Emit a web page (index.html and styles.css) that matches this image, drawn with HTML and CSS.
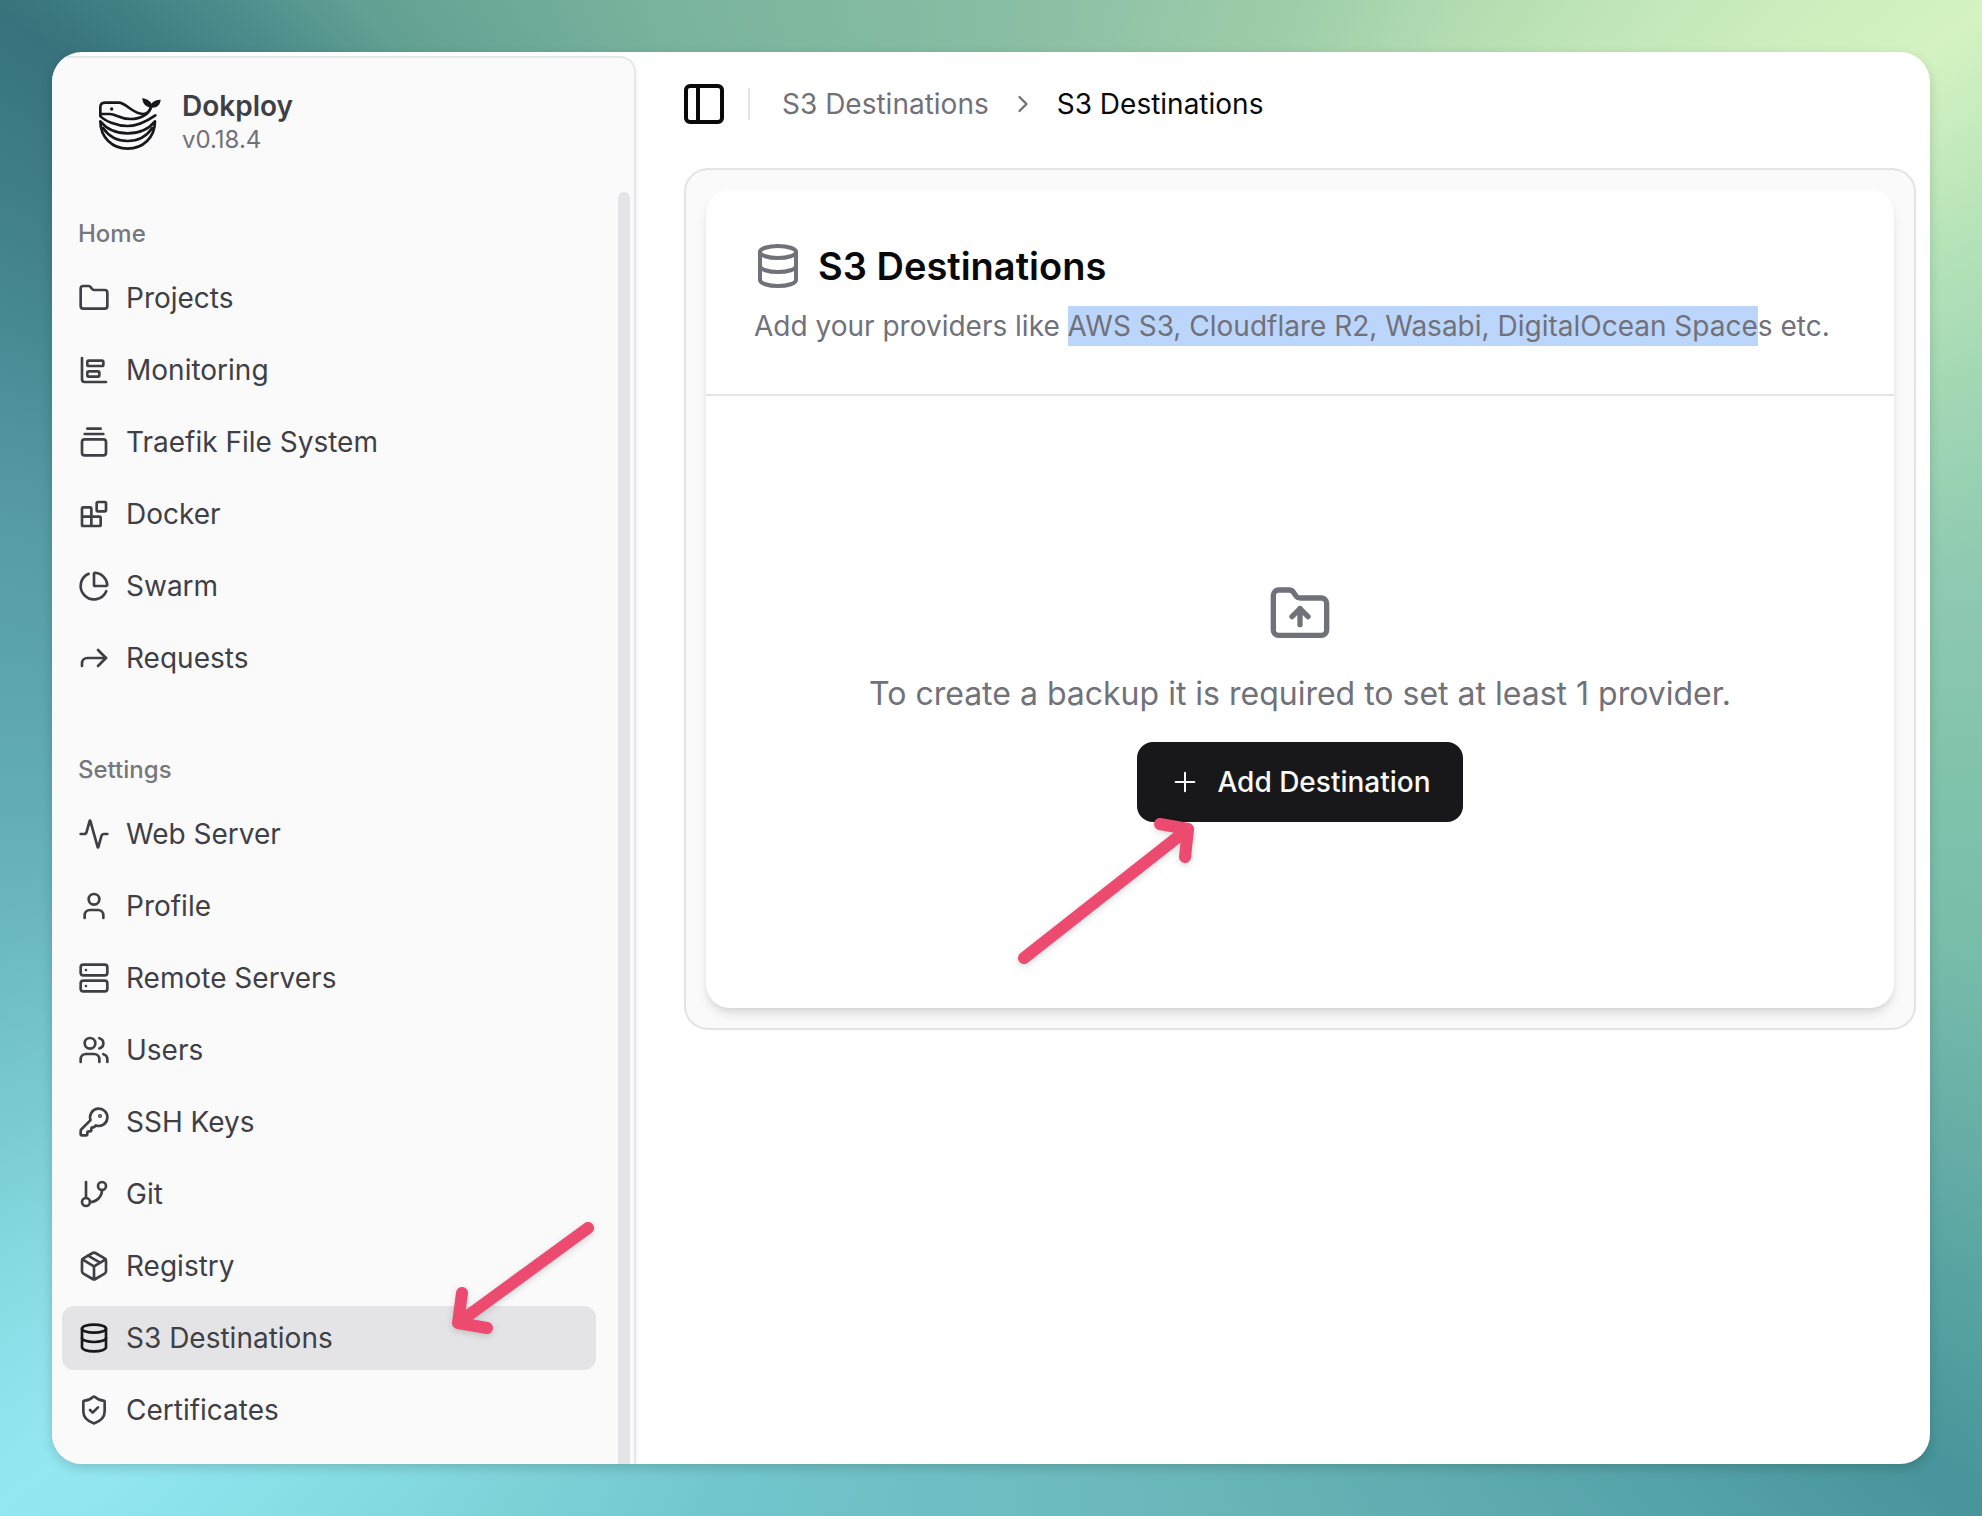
FILE: index.html
```html
<!DOCTYPE html>
<html lang="en">
<head>
<meta charset="utf-8">
<meta name="viewport" content="width=device-width, initial-scale=1">
<title>S3 Destinations - Dokploy</title>
<link rel="stylesheet" href="styles.css">
</head>
<body>
<div class="window">
  <aside class="sidebar">
    <div class="brand">
      <svg class="brand-logo" viewBox="24 38 186 156" fill="none" stroke="currentColor" stroke-width="8" stroke-linecap="round" stroke-linejoin="round" aria-hidden="true">
        <path d="M28 92V66Q28 52 42 52H84C104 52 126 86 156 86C170 86 178 74 180 62"/>
        <path d="M28 86H56C76 86 84 101 118 101C152 101 176 84 180 64"/>
        <path d="M28 92C40 106 76 122 110 122C144 122 170 106 193 90"/>
        <path d="M28 108C28 156 64 190 110 190C156 190 192 156 192 108C174 130 144 144 110 144C76 144 46 130 28 108Z"/>
        <path d="M36 128C54 154 82 167 110 167C138 167 166 154 184 128"/>
        <circle cx="62" cy="71" r="5" fill="currentColor" stroke="none"/>
        <path d="M154 38C168 42 178 46 181 55C187 46 196 44 209 43C208 58 198 68 182 67C164 66 154 54 154 38Z" fill="currentColor" stroke="none"/>
      </svg>
      <div class="brand-text">
        <span class="brand-name">Dokploy</span>
        <span class="brand-version">v0.18.4</span>
      </div>
    </div>
    <div class="nav-scroll">
      <nav class="nav" aria-label="Main">
        <section class="nav-group">
          <h2 class="nav-title">Home</h2>
          <a class="nav-item" href="#"><svg class="icon" viewBox="0 0 24 24"><path d="M20 20a2 2 0 0 0 2-2V8a2 2 0 0 0-2-2h-7.900a2 2 0 0 1-1.690-.9L9.600 3.900A2 2 0 0 0 7.930 3H4a2 2 0 0 0-2 2v13a2 2 0 0 0 2 2Z"/></svg>Projects</a>
          <a class="nav-item" href="#"><svg class="icon" viewBox="0 0 24 24"><path d="M3 3v16a2 2 0 0 0 2 2h16"/><rect x="7" y="13" width="9" height="4" rx="1"/><rect x="7" y="5" width="12" height="4" rx="1"/></svg>Monitoring</a>
          <a class="nav-item" href="#"><svg class="icon" viewBox="0 0 24 24"><path d="M7 2h10M5 6h14"/><rect width="18" height="12" x="3" y="10" rx="2"/></svg>Traefik File System</a>
          <a class="nav-item" href="#"><svg class="icon" viewBox="0 0 24 24"><rect width="7" height="7" x="14" y="3" rx="1"/><path d="M10 21V8a1 1 0 0 0-1-1H4a1 1 0 0 0-1 1v12a1 1 0 0 0 1 1h12a1 1 0 0 0 1-1v-5a1 1 0 0 0-1-1H3"/></svg>Docker</a>
          <a class="nav-item" href="#"><svg class="icon" viewBox="0 0 24 24"><path d="M21 12c.552 0 1.005-.449.950-.998a10 10 0 0 0-8.953-8.951c-.550-.055-.998.398-.998.950v8a1 1 0 0 0 1 1z"/><path d="M21.210 15.890A10 10 0 1 1 8 2.830"/></svg>Swarm</a>
          <a class="nav-item" href="#"><svg class="icon" viewBox="0 0 24 24"><path d="m15 6 6 6-6 6"/><path d="M3 18v-2a4 4 0 0 1 4-4h14"/></svg>Requests</a>
        </section>
        <section class="nav-group">
          <h2 class="nav-title">Settings</h2>
          <a class="nav-item" href="#"><svg class="icon" viewBox="0 0 24 24"><path d="M22 12h-2.480a2 2 0 0 0-1.930 1.460l-2.350 8.360a.25.25 0 0 1-.48 0L9.240 2.180a.25.25 0 0 0-.48 0l-2.350 8.360A2 2 0 0 1 4.490 12H2"/></svg>Web Server</a>
          <a class="nav-item" href="#"><svg class="icon" viewBox="0 0 24 24"><path d="M19 21v-2a4 4 0 0 0-4-4H9a4 4 0 0 0-4 4v2"/><circle cx="12" cy="7" r="4"/></svg>Profile</a>
          <a class="nav-item" href="#"><svg class="icon" viewBox="0 0 24 24"><rect width="20" height="8" x="2" y="2" rx="2"/><rect width="20" height="8" x="2" y="14" rx="2"/><path d="M6 6h.01M6 18h.01"/></svg>Remote Servers</a>
          <a class="nav-item" href="#"><svg class="icon" viewBox="0 0 24 24"><path d="M16 21v-2a4 4 0 0 0-4-4H6a4 4 0 0 0-4 4v2"/><circle cx="9" cy="7" r="4"/><path d="M22 21v-2a4 4 0 0 0-3-3.870M16 3.130a4 4 0 0 1 0 7.750"/></svg>Users</a>
          <a class="nav-item" href="#"><svg class="icon" viewBox="0 0 24 24"><path d="M2.586 17.414A2 2 0 0 0 2 18.828V21a1 1 0 0 0 1 1h3a1 1 0 0 0 1-1v-1a1 1 0 0 1 1-1h1a1 1 0 0 0 1-1v-1a1 1 0 0 1 1-1h.172a2 2 0 0 0 1.414-.586l.814-.814a6.500 6.500 0 1 0-4-4z"/><circle cx="16.500" cy="7.500" r=".5" fill="currentColor"/></svg>SSH Keys</a>
          <a class="nav-item" href="#"><svg class="icon" viewBox="0 0 24 24"><path d="M6 3v12"/><circle cx="18" cy="6" r="3"/><circle cx="6" cy="18" r="3"/><path d="M18 9a9 9 0 0 1-9 9"/></svg>Git</a>
          <a class="nav-item" href="#"><svg class="icon" viewBox="0 0 24 24"><path d="M11 21.730a2 2 0 0 0 2 0l7-4A2 2 0 0 0 21 16V8a2 2 0 0 0-1-1.730l-7-4a2 2 0 0 0-2 0l-7 4A2 2 0 0 0 3 8v8a2 2 0 0 0 1 1.730zM12 22V12"/><path d="m3.300 7 7.703 4.734a2 2 0 0 0 1.994 0L20.700 7M7.500 4.270l9 5.150"/></svg>Registry</a>
          <a class="nav-item nav-item-active" href="#" aria-current="page"><svg class="icon" viewBox="0 0 24 24"><ellipse cx="12" cy="5" rx="9" ry="3"/><path d="M3 5v14a9 3 0 0 0 18 0V5"/><path d="M3 12a9 3 0 0 0 18 0"/></svg>S3 Destinations</a>
          <a class="nav-item" href="#"><svg class="icon" viewBox="0 0 24 24"><path d="M20 13c0 5-3.500 7.500-7.660 8.950a1 1 0 0 1-.67-.01C7.500 20.500 4 18 4 13V6a1 1 0 0 1 1-1c2 0 4.500-1.200 6.240-2.720a1.170 1.170 0 0 1 1.520 0C14.510 3.810 17 5 19 5a1 1 0 0 1 1 1z"/><path d="m9 12 2 2 4-4"/></svg>Certificates</a>
        </section>
      </nav>
      <div class="scroll-thumb"></div>
    </div>
  </aside>

  <main class="main">
    <header class="topbar">
      <button class="toggle" type="button" aria-label="Toggle sidebar"><svg class="icon icon-lg" viewBox="0 0 24 24"><rect width="18" height="18" x="3" y="3" rx="2"/><path d="M9 3v18"/></svg></button>
      <div class="separator"></div>
      <nav class="crumbs" aria-label="Breadcrumb">
        <a class="crumb" href="#">S3 Destinations</a>
        <svg class="icon icon-sm" viewBox="0 0 24 24"><path d="m9 18 6-6-6-6"/></svg>
        <span class="crumb crumb-current" aria-current="page">S3 Destinations</span>
      </nav>
    </header>

    <div class="frame">
      <section class="card">
        <div class="card-head">
          <h1 class="card-title"><svg class="icon icon-lg" viewBox="0 0 24 24"><ellipse cx="12" cy="5" rx="9" ry="3"/><path d="M3 5v14a9 3 0 0 0 18 0V5"/><path d="M3 12a9 3 0 0 0 18 0"/></svg>S3 Destinations</h1>
          <p class="card-desc">Add your providers like <span class="selected">AWS S3, Cloudflare R2, Wasabi, DigitalOcean Space</span>s etc.</p>
        </div>
        <div class="card-body">
          <svg class="icon icon-xl" viewBox="0 0 24 24"><path d="M20 20a2 2 0 0 0 2-2V8a2 2 0 0 0-2-2h-7.900a2 2 0 0 1-1.690-.9L9.600 3.900A2 2 0 0 0 7.930 3H4a2 2 0 0 0-2 2v13a2 2 0 0 0 2 2Z"/><path d="M12 10v6"/><path d="m9 13 3-3 3 3"/></svg>
          <p class="empty-text">To create a backup it is required to set at least 1 provider.</p>
          <div class="action">
            <button class="add" type="button"><svg class="icon icon-thin" viewBox="0 0 24 24"><path d="M5 12h14M12 5v14"/></svg>Add Destination</button>
            <svg class="arrow arrow-add" width="186" height="156" viewBox="0 0 186 156" aria-hidden="true"><path d="M10 146 174 17M146 12 174 17 171 45"/></svg>
          </div>
        </div>
      </section>
    </div>
  </main>
  <svg class="arrow arrow-nav" width="156" height="126" viewBox="0 0 156 126" aria-hidden="true"><path d="M146 10 16 105M20 75 16 105 45 110"/></svg>
</div>
</body>
</html>
```
FILE: styles.css
```css
* { box-sizing: border-box; }

body {
  margin: 0;
  height: 100vh;
  padding: 52px;
  font-family: Inter, "Liberation Sans", sans-serif;
  font-size: 28px;
  line-height: 40px;
  color: #09090b;
  /* the colours run clockwise round the window, from the top centre */
  background: conic-gradient(
    #87bda3 0deg,
    #9ecdaa 22deg,
    #bfe5b6 39deg,
    #d5f3c2 53deg,
    #b8e4b9 61deg,
    #a0d6b4 70deg,
    #8fcab1 79deg,
    #83c3ac 90deg,
    #78bcaa 101deg,
    #66ada6 112deg,
    #52a0a0 121deg,
    #47959a 127deg,
    #54a3a8 137deg,
    #5fadb0 149deg,
    #6ab7ba 165deg,
    #6dbdc1 180deg,
    #72c6cd 201deg,
    #7dd2d8 213deg,
    #88dfe6 224deg,
    #94e8f2 233deg,
    #88dce4 241deg,
    #7bccd2 249deg,
    #68b5bd 262deg,
    #60aab2 270deg,
    #559aa3 285deg,
    #468890 295deg,
    #38727c 307deg,
    #458388 312deg,
    #62a093 320deg,
    #70ac9a 329deg,
    #7ab39c 336deg,
    #87bda3 360deg
  );
}

h1, h2, p { margin: 0; font: inherit; }
a { color: inherit; text-decoration: none; }
button { border: 0; padding: 0; background: none; font: inherit; color: inherit; cursor: pointer; }

.icon {
  flex: none;
  width: 32px;
  height: 32px;
  fill: none;
  stroke: currentColor;
  stroke-width: 2;
  stroke-linecap: round;
  stroke-linejoin: round;
}
.icon-sm { width: 28px; height: 28px; }
.icon-lg { width: 48px; height: 48px; }
.icon-xl { width: 64px; height: 64px; }
.icon-thin { stroke-width: 1.5; }

.window {
  position: relative;
  display: flex;
  height: 100%;
  overflow: hidden;
  border-radius: 30px;
  background: #fff;
  box-shadow: 0 4px 12px rgba(0, 0, 0, 0.16);
}

.sidebar {
  flex: none;
  display: flex;
  flex-direction: column;
  width: 584px;
  margin-top: 4px;
  border-top: 2px solid #e5e7eb;
  border-right: 2px solid #e5e7eb;
  border-top-right-radius: 16px;
  background: #fafafa;
  box-shadow: 0 2px 4px rgba(0, 0, 0, 0.08);
}

.brand { display: flex; gap: 20px; padding: 32px 46px; height: 134px; }
.brand-logo { width: 64px; height: 52px; margin-top: 8px; color: #18181b; }
.brand-text { display: flex; flex-direction: column; color: #3f3f46; }
.brand-name { font-weight: 600; line-height: 32px; }
.brand-version { font-size: 24px; line-height: 36px; color: #71717a; }

.nav-scroll { flex: 1; min-height: 0; display: flex; overflow: hidden; }
.nav { flex: 1; display: flex; flex-direction: column; gap: 48px; padding: 10px 22px 0 10px; }
.nav-group { display: flex; flex-direction: column; gap: 8px; }
.nav-title {
  padding: 0 16px;
  font-size: 24px;
  font-weight: 500;
  line-height: 64px;
  margin-bottom: -8px;
  color: #77777b;
}
.nav-item {
  display: flex;
  align-items: center;
  gap: 16px;
  height: 64px;
  padding: 0 16px;
  border-radius: 12px;
  color: #3f3f46;
  white-space: nowrap;
}
.nav-item-active { background: #e4e4e6; }
.nav-item-active .icon { color: #18181b; }
.scroll-thumb { width: 12px; margin-right: 4px; border-radius: 6px 6px 0 0; background: #e4e4e6; }

.main { flex: 1; min-width: 0; padding: 0 14px 0 44px; }
.topbar { display: flex; align-items: center; height: 104px; }
.toggle { display: flex; }
.separator { width: 2px; height: 32px; margin: 0 32px 0 20px; background: #e4e4e7; }
.crumbs { display: flex; align-items: center; gap: 20px; color: #71717a; }
.crumb-current { color: #09090b; }

.frame {
  margin: 12px 0 0 4px;
  padding: 20px;
  border: 2px solid #e4e4e7;
  border-radius: 24px;
  background: #fafafa;
}
.card {
  border-radius: 24px;
  background: #fff;
  box-shadow: 0 8px 12px -2px rgba(0, 0, 0, 0.1), 0 4px 8px -4px rgba(0, 0, 0, 0.12);
}
.card-head { padding: 48px; border-bottom: 2px solid #e4e4e7; }
.card-title { display: flex; align-items: center; gap: 16px; font-size: 38px; font-weight: 600; line-height: 56px; }
.card-title .icon { color: #71717a; }
.card-desc { margin-top: 12px; color: #71717a; }
.selected { padding: 3px 0; background: #bcd6fb; }
.card-body {
  display: flex;
  flex-direction: column;
  align-items: center;
  justify-content: center;
  gap: 24px;
  min-height: 612px;
  color: #71717a;
}
.empty-text { font-size: 32px; line-height: 48px; }
.action { position: relative; }
.add {
  display: flex;
  align-items: center;
  gap: 16px;
  height: 80px;
  padding: 0 32px;
  border-radius: 16px;
  font-weight: 500;
  color: #fafafa;
  background: #18181b;
}

.arrow {
  position: absolute;
  fill: none;
  stroke: #ec4a6f;
  stroke-width: 12;
  stroke-linecap: round;
  stroke-linejoin: round;
  filter: drop-shadow(0 2px 3px rgba(0, 0, 0, 0.16));
  pointer-events: none;
}
.arrow-add { left: -123px; top: 70px; }
.arrow-nav { left: 390px; bottom: 120px; }
```
